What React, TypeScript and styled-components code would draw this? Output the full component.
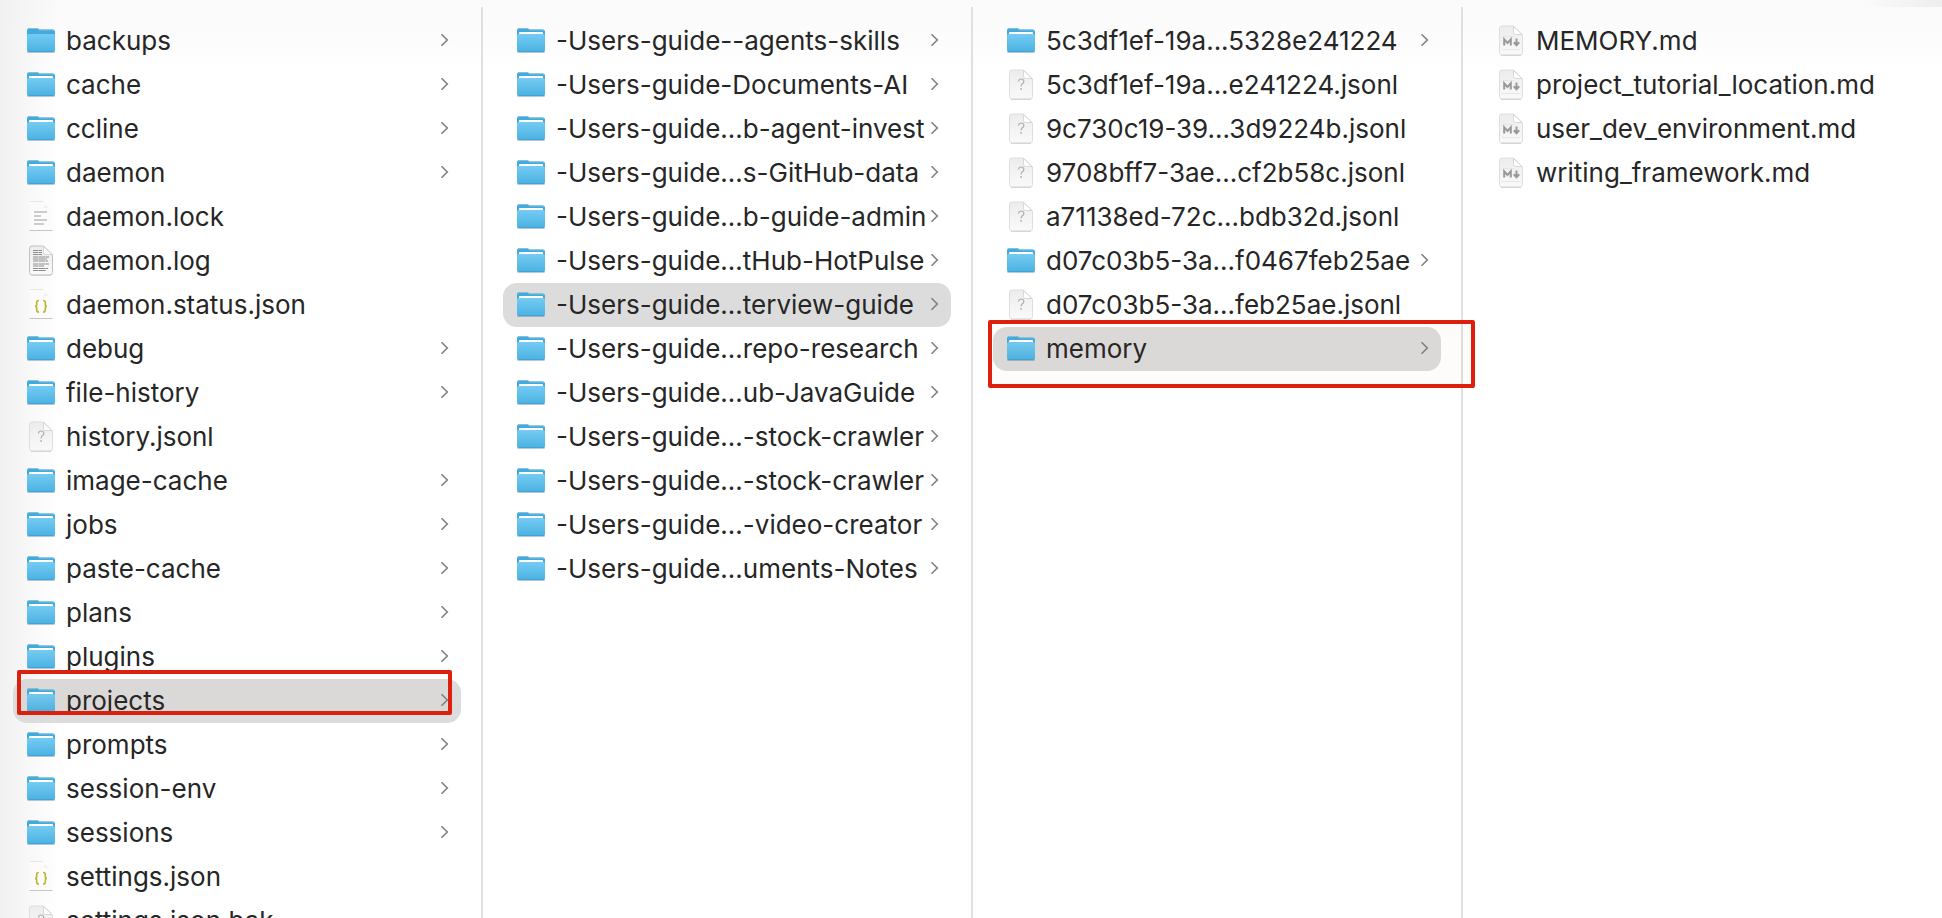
import React from "react";
import styled, { createGlobalStyle, css } from "styled-components";

const GlobalStyle = createGlobalStyle`
  *, *::before, *::after { box-sizing: border-box; }
  body {
    margin: 0;
    background: #fff;
    color: #262626;
    font-family: Inter, "Liberation Sans", sans-serif;
    font-size: 26px;
    line-height: 44px;
  }
`;

type Kind = "folder" | "empty" | "text" | "log" | "json" | "unknown" | "markdown";

interface Entry {
  name: string;
  kind: Kind;
  selected?: boolean;
  mark?: "tight" | "wide";
}

const folder = (name: string): Entry => ({ name, kind: "folder" });
const unknown = (name: string): Entry => ({ name, kind: "unknown" });
const markdown = (name: string): Entry => ({ name, kind: "markdown" });

const columns: { label: string; entries: Entry[] }[] = [
  {
    label: "Home",
    entries: [
      { name: "backups", kind: "empty" },
      folder("cache"),
      folder("ccline"),
      folder("daemon"),
      { name: "daemon.lock", kind: "text" },
      { name: "daemon.log", kind: "log" },
      { name: "daemon.status.json", kind: "json" },
      folder("debug"),
      folder("file-history"),
      unknown("history.jsonl"),
      folder("image-cache"),
      folder("jobs"),
      folder("paste-cache"),
      folder("plans"),
      folder("plugins"),
      { name: "projects", kind: "folder", selected: true, mark: "tight" },
      folder("prompts"),
      folder("session-env"),
      folder("sessions"),
      { name: "settings.json", kind: "json" },
      unknown("settings.json.bak"),
    ],
  },
  {
    label: "projects",
    entries: [
      folder("-Users-guide--agents-skills"),
      folder("-Users-guide-Documents-AI"),
      folder("-Users-guide...b-agent-invest"),
      folder("-Users-guide...s-GitHub-data"),
      folder("-Users-guide...b-guide-admin"),
      folder("-Users-guide...tHub-HotPulse"),
      { name: "-Users-guide...terview-guide", kind: "folder", selected: true },
      folder("-Users-guide...repo-research"),
      folder("-Users-guide...ub-JavaGuide"),
      folder("-Users-guide...-stock-crawler"),
      folder("-Users-guide...-stock-crawler"),
      folder("-Users-guide...-video-creator"),
      folder("-Users-guide...uments-Notes"),
    ],
  },
  {
    label: "interview-guide",
    entries: [
      folder("5c3df1ef-19a...5328e241224"),
      unknown("5c3df1ef-19a...e241224.jsonl"),
      unknown("9c730c19-39...3d9224b.jsonl"),
      unknown("9708bff7-3ae...cf2b58c.jsonl"),
      unknown("a71138ed-72c...bdb32d.jsonl"),
      folder("d07c03b5-3a...f0467feb25ae"),
      unknown("d07c03b5-3a...feb25ae.jsonl"),
      { name: "memory", kind: "folder", selected: true, mark: "wide" },
    ],
  },
  {
    label: "memory",
    entries: [
      markdown("MEMORY.md"),
      markdown("project_tutorial_location.md"),
      markdown("user_dev_environment.md"),
      markdown("writing_framework.md"),
    ],
  },
];

const Browser = styled.main`
  display: grid;
  grid-template-columns: 483px 490px 490px minmax(0, 1fr);
  height: 100vh;
  padding-top: 7px;
  overflow: hidden;
  background:
    linear-gradient(to right, rgba(238, 238, 238, 0), #eee) right top / 80px 7px no-repeat,
    linear-gradient(to right, #f1f1f1, rgba(255, 255, 255, 0) 60px),
    linear-gradient(to bottom, #fafafa, #fdfdfd 50px, #fff 72px);
`;

const Column = styled.ul`
  margin: 0;
  padding: 12px 20px 0;
  list-style: none;
  border-right: 2px solid #e0e0e0;

  &:first-child { padding-left: 13px; }
  &:last-child { border-right: 0; }
`;

const Item = styled.li`
  position: relative;
  height: 44px;
`;

const Row = styled.button<{ $selected?: boolean }>`
  display: flex;
  align-items: center;
  gap: 10px;
  width: 100%;
  max-width: 448px;
  height: 44px;
  padding: 0 12px 0 13px;
  border: 0;
  border-radius: 14px;
  background: ${(p) => (p.$selected ? "#dcdcdc" : "transparent")};
  color: inherit;
  font: inherit;
  text-align: left;
  white-space: nowrap;
`;

const Name = styled.span`
  flex: 1;
  min-width: 0;
`;

const Mark = styled.span<{ $shape: "tight" | "wide" }>`
  position: absolute;
  border: 4px solid #dd1f0e;
  border-radius: 2px;
  background: rgba(220, 120, 30, 0.02);
  pointer-events: none;
  ${(p) =>
    p.$shape === "tight"
      ? css`inset: -9px 9px 8px 4px;`
      : css`inset: -7px -34px -17px -5px;`}
`;

const Icon = styled.svg`
  flex: none;
  width: 30px;
  height: 32px;
  margin-bottom: 2px;
`;

const Chevron = styled.svg`
  flex: none;
  width: 9px;
  height: 14px;
  margin-bottom: 2px;
`;

const Gradients = styled.svg`
  position: absolute;
  width: 0;
  height: 0;
`;

function SharedGradients() {
  return (
    <Gradients aria-hidden="true">
      <defs>
        <linearGradient id="front" x1="0" y1="0" x2="0" y2="1">
          <stop offset="0" stopColor="#74cbf3" />
          <stop offset="1" stopColor="#4bb2e2" />
        </linearGradient>
        <linearGradient id="paper" x1="0" y1="0" x2="0" y2="1">
          <stop offset="0" stopColor="#ececec" />
          <stop offset="1" stopColor="#fafafa" />
        </linearGradient>
        <linearGradient id="curl" x1="0" y1="1" x2="1" y2="0">
          <stop offset="0" stopColor="#c4c4c4" />
          <stop offset="0.5" stopColor="#fff" />
        </linearGradient>
      </defs>
    </Gradients>
  );
}

function FolderIcon({ empty }: { empty: boolean }) {
  return (
    <Icon viewBox="0 0 30 32" aria-hidden="true">
      <path d="M1 28.500h28" stroke="#000" strokeOpacity=".14" />
      <path d="M1 6.500Q1 4 3.500 4h7q1.300 0 2 .7t2 .7H26.500Q29 5.400 29 8v17H1z" fill="#45aadb" />
      <path d="M2 5.500Q2.400 4.500 4 4.500h6.500q1 0 1.700.6t2 .8H26.500q1.500 0 2 1.100" fill="none" stroke="#7dc5e7" />
      {!empty && <rect x="3" y="8" width="24" height="4" rx="1" fill="#fff" />}
      <path d="M1 12q0-2 2-2h24q2 0 2 2v14q0 2-2 2H3q-2 0-2-2z" fill="url(#front)" />
      <path d="M1.500 27.300q.5.500 1.500.5h24q1 0 1.500-.5" fill="none" stroke="#3798c9" strokeWidth=".8" />
    </Icon>
  );
}

function PageIcon({ kind }: { kind: Kind }) {
  const open = kind === "text" || kind === "json";
  return (
    <Icon viewBox="0 0 30 32" aria-hidden="true">
      {open ? (
        <>
          <path d="M4 1.500h13l9 9V30H4z" fill="#fbfbfb" />
          <path d="M4 1.500h13" stroke="#e6e6e6" />
          <path d="M17 1.500q1.500 1 1.500 6 5 .5 7.500 3z" fill="url(#curl)" />
          <path d="M3.500 30.500h23" stroke="#c6c6c6" />
        </>
      ) : (
        <>
          <path
            d="M6 2h11.500l9 9v17.500q0 2.500-2.500 2.500H6q-2.500 0-2.500-2.500V4.500Q3.500 2 6 2z"
            fill="url(#paper)"
            stroke={kind === "log" ? "#c2c2c2" : "#dedede"}
          />
          <path d="M17.500 2.500v6q0 2 2 2h6.500z" fill="#fff" stroke="#cfcfcf" strokeWidth=".8" />
          <path d="M5 31.300h20" stroke="#c8c8c8" strokeWidth=".8" />
        </>
      )}
      {kind === "text" && (
        <path d="M8 12h13M8 16h7M8 20h13M8 24h10" stroke="#bdbdbd" strokeWidth="1.600" />
      )}
      {kind === "log" && (
        <g stroke="#8f8f8f" strokeWidth="1.200" strokeDasharray="5 .4 7 .3">
          <path d="M7 6.500h9M7 8.500h9M7 10.500h9" />
          <path d="M7 13h16M7 15h14M7 17h15M7 20h16M7 22h11M7 24.500h15M7 26.500h13" />
        </g>
      )}
      {kind === "json" && (
        <g fill="none" stroke="#bdb93a" strokeWidth="1.700">
          <path d="M13 12.500q-2.300 0-2.300 2v2q0 1.800-1.700 1.800 1.700 0 1.700 1.800v2q0 2 2.300 2" />
          <path d="M17 12.500q2.300 0 2.300 2v2q0 1.800 1.700 1.800-1.700 0-1.700 1.800v2q0 2-2.300 2" />
        </g>
      )}
      {kind === "unknown" && (
        <>
          <path d="M12.500 13.500q.2-2.500 2.600-2.500 2.700 0 2.700 2.400 0 1.500-1.500 2.400-1.200.8-1.200 2.700" fill="none" stroke="#b0b0b0" strokeWidth="1.200" />
          <circle cx="15.100" cy="21" r=".9" fill="#b0b0b0" />
        </>
      )}
      {kind === "markdown" && (
        <>
          <path d="M8.200 21.500v-6.200l3.300 3.700 3.300-3.700v6.200" fill="none" stroke="#999" strokeWidth="2" />
          <path d="M20.500 14.500v6M17.800 18.300l2.700 2.900 2.700-2.900" fill="none" stroke="#999" strokeWidth="2" />
          <path d="M6 12.500h12M6 25.500h18" stroke="#e2e2e2" strokeWidth=".8" />
        </>
      )}
    </Icon>
  );
}

function EntryRow({ entry }: { entry: Entry }) {
  const isFolder = entry.kind === "folder" || entry.kind === "empty";
  return (
    <Item>
      <Row type="button" $selected={entry.selected} aria-pressed={!!entry.selected}>
        {isFolder ? <FolderIcon empty={entry.kind === "empty"} /> : <PageIcon kind={entry.kind} />}
        <Name>{entry.name}</Name>
        {isFolder && (
          <Chevron viewBox="0 0 9 14" aria-hidden="true">
            <path d="M1.500 1.200 7.300 7l-5.800 5.800" fill="none" stroke="#808080" strokeWidth="1.600" />
          </Chevron>
        )}
      </Row>
      {entry.mark && <Mark $shape={entry.mark} />}
    </Item>
  );
}

export default function App() {
  return (
    <>
      <GlobalStyle />
      <SharedGradients />
      <Browser>
        {columns.map((column) => (
          <Column key={column.label} aria-label={column.label}>
            {column.entries.map((entry, i) => (
              <EntryRow key={i} entry={entry} />
            ))}
          </Column>
        ))}
      </Browser>
    </>
  );
}
